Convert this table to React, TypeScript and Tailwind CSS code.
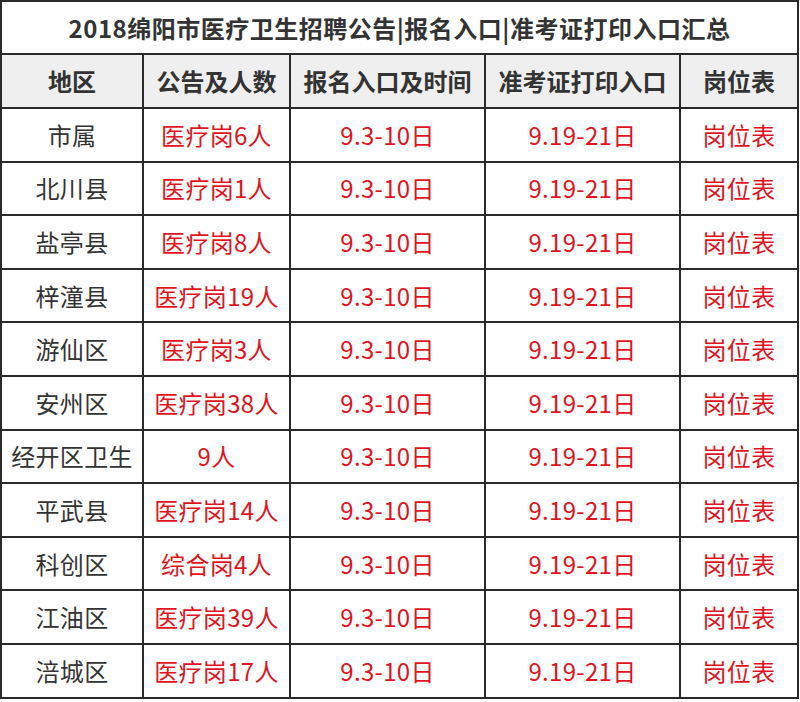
import React from 'react';

const rows: [string, string][] = [
  ['市属', '医疗岗6人'],
  ['北川县', '医疗岗1人'],
  ['盐亭县', '医疗岗8人'],
  ['梓潼县', '医疗岗19人'],
  ['游仙区', '医疗岗3人'],
  ['安州区', '医疗岗38人'],
  ['经开区卫生', '9人'],
  ['平武县', '医疗岗14人'],
  ['科创区', '综合岗4人'],
  ['江油区', '医疗岗39人'],
  ['涪城区', '医疗岗17人'],
];

const headers = ['地区', '公告及人数', '报名入口及时间', '准考证打印入口', '岗位表'];

export default function App() {
  return (
    <div
      className="w-[800px] h-[702px] bg-white overflow-hidden"
      style={{ fontFamily: '"Noto Sans CJK SC", "Noto Sans", sans-serif' }}
    >
      <table className="w-[797px] table-fixed border-collapse border-2 border-[#2a2a2a]">
        <colgroup>
          <col className="w-[142px]" />
          <col className="w-[147px]" />
          <col className="w-[195px]" />
          <col className="w-[195px]" />
          <col className="w-[118px]" />
        </colgroup>
        <thead>
          <tr className="h-[53px]">
            <th
              colSpan={5}
              className="border-2 border-[#2a2a2a] bg-white text-[24px] font-bold text-[#333] tracking-[0.5px]"
            >
              2018绵阳市医疗卫生招聘公告|报名入口|准考证打印入口汇总
            </th>
          </tr>
          <tr className="h-[54px] bg-[#efefef]">
            {headers.map((h) => (
              <th key={h} className="border-2 border-[#2a2a2a] text-[24px] font-bold text-[#333]">
                {h}
              </th>
            ))}
          </tr>
        </thead>
        <tbody>
          {rows.map(([area, jobs]) => (
            <tr key={area} className="h-[53.6px] text-[24px] text-center tracking-[0.3px]">
              <td className="border-2 border-[#2a2a2a] text-[#333]">{area}</td>
              <td className="border-2 border-[#2a2a2a] text-[#e0141e]">{jobs}</td>
              <td className="border-2 border-[#2a2a2a] text-[#e0141e]">9.3-10日</td>
              <td className="border-2 border-[#2a2a2a] text-[#e0141e]">9.19-21日</td>
              <td className="border-2 border-[#2a2a2a] text-[#e0141e]">岗位表</td>
            </tr>
          ))}
        </tbody>
      </table>
    </div>
  );
}
